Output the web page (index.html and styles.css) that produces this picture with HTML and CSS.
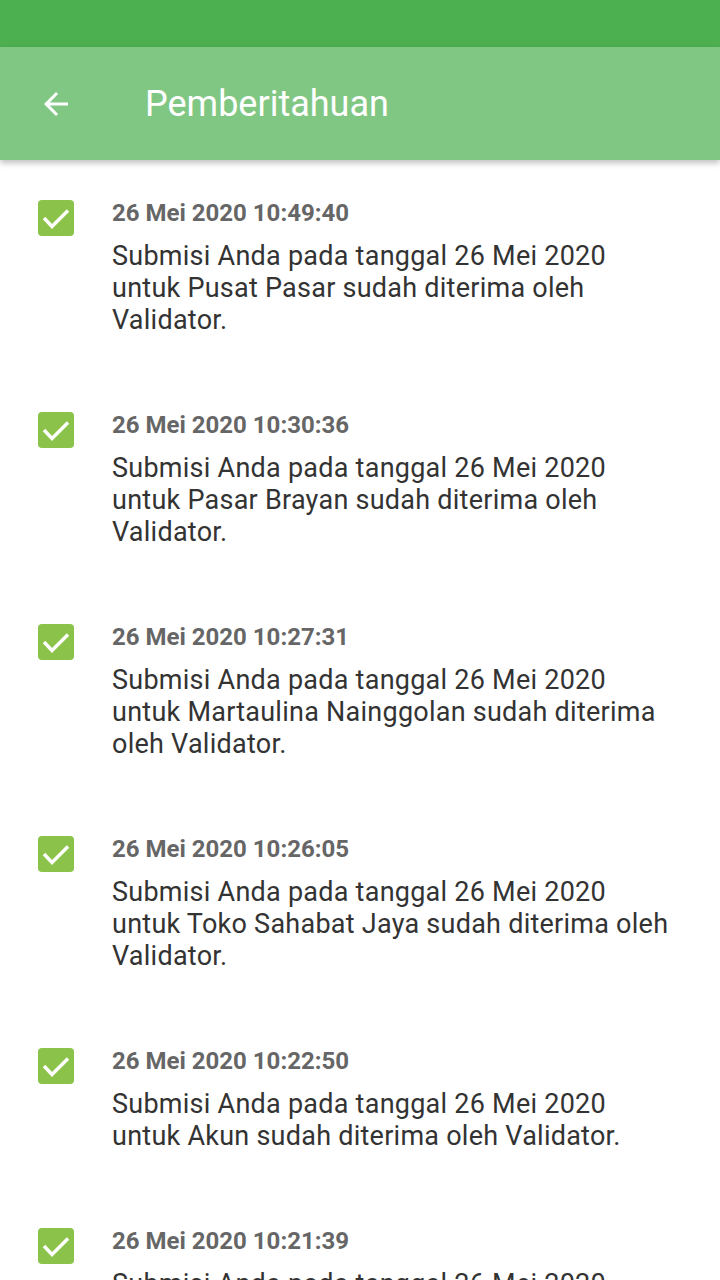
FILE: index.html
```html
<html>
    <head>
        <link rel="stylesheet" href="styles.css">
    </head>
    <body>
        <div class="status-bar"></div>
        <div class="app-bar">
            <svg class="back" width="36" height="36" viewBox="0 0 24 24">
                <path d="M20 11H7.83l5.59-5.59L12 4l-8 8 8 8 1.41-1.41L7.83 13H20v-2z" fill="#fff"/>
            </svg>
            <h1>Pemberitahuan</h1>
        </div>

        <div class="list">
            <div class="item">
                <div class="check"><svg width="36" height="36" viewBox="0 0 36 36"><path d="M6 18l8 8.5L30 10.5" fill="none" stroke="#fff" stroke-width="3.4"/></svg></div>
                <div class="content">
                    <div class="date">26 Mei 2020 10:49:40</div>
                    <p>Submisi Anda pada tanggal 26 Mei 2020 untuk Pusat Pasar sudah diterima oleh Validator.</p>
                </div>
            </div>
            <div class="item">
                <div class="check"><svg width="36" height="36" viewBox="0 0 36 36"><path d="M6 18l8 8.5L30 10.5" fill="none" stroke="#fff" stroke-width="3.4"/></svg></div>
                <div class="content">
                    <div class="date">26 Mei 2020 10:30:36</div>
                    <p>Submisi Anda pada tanggal 26 Mei 2020 untuk Pasar Brayan sudah diterima oleh Validator.</p>
                </div>
            </div>
            <div class="item">
                <div class="check"><svg width="36" height="36" viewBox="0 0 36 36"><path d="M6 18l8 8.5L30 10.5" fill="none" stroke="#fff" stroke-width="3.4"/></svg></div>
                <div class="content">
                    <div class="date">26 Mei 2020 10:27:31</div>
                    <p>Submisi Anda pada tanggal 26 Mei 2020 untuk Martaulina Nainggolan sudah diterima oleh Validator.</p>
                </div>
            </div>
            <div class="item">
                <div class="check"><svg width="36" height="36" viewBox="0 0 36 36"><path d="M6 18l8 8.5L30 10.5" fill="none" stroke="#fff" stroke-width="3.4"/></svg></div>
                <div class="content">
                    <div class="date">26 Mei 2020 10:26:05</div>
                    <p>Submisi Anda pada tanggal 26 Mei 2020 untuk Toko Sahabat Jaya sudah diterima oleh Validator.</p>
                </div>
            </div>
            <div class="item">
                <div class="check"><svg width="36" height="36" viewBox="0 0 36 36"><path d="M6 18l8 8.5L30 10.5" fill="none" stroke="#fff" stroke-width="3.4"/></svg></div>
                <div class="content">
                    <div class="date">26 Mei 2020 10:22:50</div>
                    <p>Submisi Anda pada tanggal 26 Mei 2020 untuk Akun sudah diterima oleh Validator.</p>
                </div>
            </div>
            <div class="item">
                <div class="check"><svg width="36" height="36" viewBox="0 0 36 36"><path d="M6 18l8 8.5L30 10.5" fill="none" stroke="#fff" stroke-width="3.4"/></svg></div>
                <div class="content">
                    <div class="date">26 Mei 2020 10:21:39</div>
                    <p>Submisi Anda pada tanggal 26 Mei 2020 untuk Pusat Pasar sudah diterima oleh Validator.</p>
                </div>
            </div>
        </div>
    </body>
</html>
```

FILE: styles.css
```css
html, body {
    font-family: Roboto, "Liberation Sans", sans-serif;
    background: #fff;
    margin: 0;
    padding: 0;
    height: 1280px;
    overflow: hidden;
}
.status-bar {
    height: 47px;
    background: #4caf50;
}
.app-bar {
    height: 113px;
    background: #81c784;
    display: flex;
    align-items: center;
    padding-left: 38px;
    box-shadow: 0 3px 6px rgba(0, 0, 0, 0.25);
    position: relative;
}
.app-bar .back {
    display: block;
}
h1 {
    margin: 0 0 0 71px;
    color: #fff;
    font-size: 36px;
    font-weight: 400;
}
.list {
    padding-top: 38px;
}
.item {
    display: flex;
    padding: 0 43px 74px 38px;
    gap: 38px;
}
.check {
    width: 36px;
    height: 36px;
    flex: none;
    margin-top: 2px;
    background: #8bc34a;
    border-radius: 4px;
}
.check svg {
    display: block;
}
.content {
    flex: 1;
}
.date {
    color: #666;
    font-size: 24px;
    font-weight: 700;
    line-height: 30px;
}
p {
    margin: 12px 0 0 0;
    color: #333;
    font-size: 27px;
    line-height: 32px;
    letter-spacing: 0.25px;
}
```
